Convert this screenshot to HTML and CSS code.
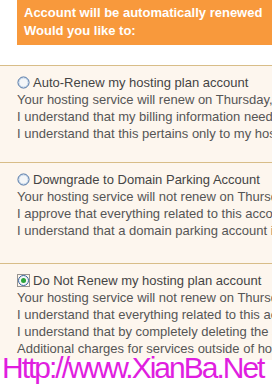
FILE: index.html
```html
<!DOCTYPE html>
<html lang="en">
<head>
  <meta charset="UTF-8">
  <title>Renewal options</title>
  <link rel="stylesheet" href="styles.css">
</head>
<body>
  <div class="notice">
    <p>Account will be automatically renewed</p>
    <p>Would you like to:</p>
  </div>

  <div class="options">
    <div class="option">
      <label class="choice">
        <svg class="radio" width="13" height="13" viewBox="0 0 13 13"><circle cx="6.5" cy="6.5" r="5.5" fill="#f4f6f8" stroke="#35619a" stroke-width="1"/><circle cx="6.5" cy="6.5" r="4.5" fill="none" stroke="#c6d7ea" stroke-width="1"/></svg>
        Auto-Renew my hosting plan account
      </label>
      <p>Your hosting service will renew on Thursday, June 26</p>
      <p>I understand that my billing information needs to be current</p>
      <p>I understand that this pertains only to my hosting plan</p>
    </div>

    <div class="option option-tall">
      <label class="choice">
        <svg class="radio" width="13" height="13" viewBox="0 0 13 13"><circle cx="6.5" cy="6.5" r="5.5" fill="#f4f6f8" stroke="#35619a" stroke-width="1"/><circle cx="6.5" cy="6.5" r="4.5" fill="none" stroke="#c6d7ea" stroke-width="1"/></svg>
        Downgrade to Domain Parking Account
      </label>
      <p>Your hosting service will not renew on Thursday, June 26</p>
      <p>I approve that everything related to this account will be removed</p>
      <p>I understand that a domain parking account is free</p>
    </div>

    <div class="option">
      <label class="choice">
        <svg class="radio" width="13" height="13" viewBox="0 0 13 13"><rect x="0.5" y="0.5" width="12" height="12" fill="none" stroke="#333" stroke-width="1" stroke-dasharray="1 1"/><circle cx="6.5" cy="6.5" r="5" fill="#f4f6f8" stroke="#35619a" stroke-width="1"/><circle cx="6.5" cy="6.5" r="2.5" fill="#2aa43a"/></svg>
        Do Not Renew my hosting plan account
      </label>
      <p>Your hosting service will not renew on Thursday, June 26</p>
      <p>I understand that everything related to this account will be removed</p>
      <p>I understand that by completely deleting the account</p>
      <p>Additional charges for services outside of hosting may apply</p>
    </div>
  </div>

  <div class="watermark">Http://www.XianBa.Net</div>
</body>
</html>
```

FILE: styles.css
```css
body {
  margin: 0;
  font-family: "Liberation Sans", Arial, sans-serif;
  background: #fff;
  width: 272px;
  height: 387px;
  overflow: hidden;
  position: relative;
}
p {
  margin: 0;
  white-space: nowrap;
}
.notice {
  margin-left: 17px;
  height: 45px;
  box-sizing: border-box;
  padding: 4px 0 0 7px;
  background: #f8993c;
  color: #fff;
  font-weight: bold;
  font-size: 13px;
  line-height: 18px;
  white-space: nowrap;
  overflow: hidden;
}
.options {
  margin-top: 20px;
}
.option {
  height: 97px;
  box-sizing: border-box;
  border-top: 1px solid #d8bd88;
  background: #fdf6ee;
  padding: 8px 0 0 17px;
  color: #555;
  font-size: 13px;
  line-height: 17px;
  overflow: hidden;
}
.option-tall {
  height: 101px;
}
.choice {
  display: flex;
  align-items: center;
  gap: 3px;
  white-space: nowrap;
  color: #444;
}
.radio {
  flex: none;
}
.watermark {
  position: absolute;
  left: 2px;
  top: 350px;
  color: #e01ee0;
  font-size: 30px;
  line-height: 36px;
  letter-spacing: -2px;
  white-space: nowrap;
}
```
